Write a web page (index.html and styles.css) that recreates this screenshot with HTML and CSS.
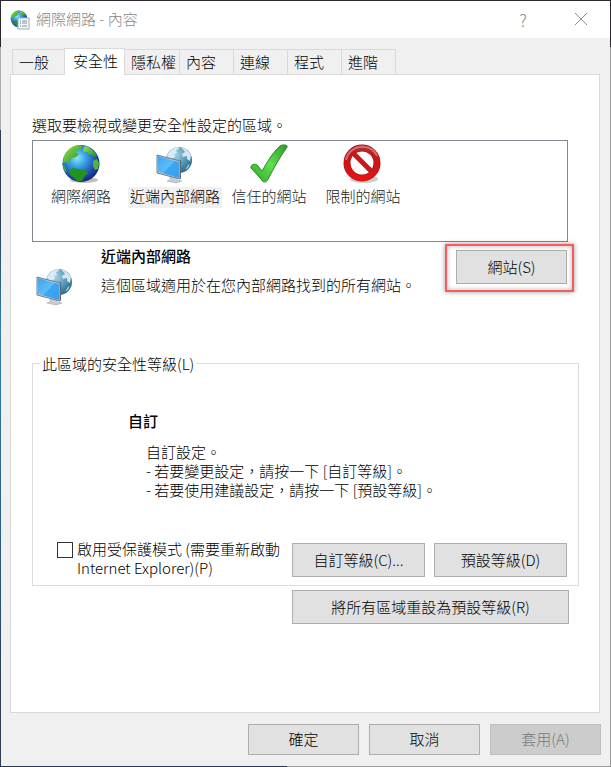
FILE: index.html
```html
<!DOCTYPE html>
<html lang="zh-Hant">
<head>
  <meta charset="UTF-8">
  <meta name="viewport" content="width=device-width, initial-scale=1.0">
  <title>網際網路 - 內容</title>
  <link rel="stylesheet" href="styles.css">
</head>
<body>
  <!-- shared icons -->
  <svg class="defs" aria-hidden="true">
    <defs>
      <radialGradient id="sea" cx="0.4" cy="0.35" r="0.65">
        <stop offset="0" stop-color="#8fe6fb"/>
        <stop offset="0.35" stop-color="#38a5e4"/>
        <stop offset="0.75" stop-color="#2350b4"/>
        <stop offset="1" stop-color="#142b78"/>
      </radialGradient>
      <linearGradient id="land" x1="0" y1="0" x2="1" y2="1">
        <stop offset="0" stop-color="#9be650"/>
        <stop offset="1" stop-color="#1d8a20"/>
      </linearGradient>
      <radialGradient id="paleSea" cx="0.35" cy="0.3" r="0.75">
        <stop offset="0" stop-color="#a9d4e6"/>
        <stop offset="0.55" stop-color="#5a9cbc"/>
        <stop offset="1" stop-color="#2c6686"/>
      </radialGradient>
      <linearGradient id="screen" x1="0" y1="0" x2="1" y2="1">
        <stop offset="0" stop-color="#3fa4ee"/>
        <stop offset="0.5" stop-color="#5fbdf8"/>
        <stop offset="0.52" stop-color="#3ba6f2"/>
        <stop offset="1" stop-color="#3c9eea"/>
      </linearGradient>
      <linearGradient id="tick" x1="1" y1="0" x2="0" y2="1">
        <stop offset="0" stop-color="#2f9a28"/>
        <stop offset="0.5" stop-color="#5fe04e"/>
        <stop offset="1" stop-color="#2aa324"/>
      </linearGradient>
      <linearGradient id="stop" x1="0" y1="0" x2="0" y2="1">
        <stop offset="0" stop-color="#b8282a"/>
        <stop offset="0.5" stop-color="#cc1214"/>
        <stop offset="1" stop-color="#e61412"/>
      </linearGradient>
    </defs>
    <symbol id="icon-globe" viewBox="0 0 40 40">
      <ellipse cx="23" cy="36" rx="14" ry="3" fill="#000" opacity="0.25"/>
      <circle cx="20" cy="19.500" r="18.500" fill="url(#sea)"/>
      <path d="M3 12C6 6 11 2 17 1l4 1-1 3-4 1-1 3 3 1-3 3-4 1-3 4 0 2-3-2-3 1z" fill="url(#land)"/>
      <path d="M24 2c6 2 10 6 12 10l-3 1-3-3-2 1-2-3-3 0-1-3z" fill="url(#land)"/>
      <path d="M32 17l4-2 2 4-1 6-3 1-2-4z" fill="#4fb63a"/>
      <path d="M8 27l4-3 5 1 8 1 2 3-4 4-2 4-5 0-4-4-3-2z" fill="#1f9420"/>
      <path d="M1 19l3 4 2 6-3-3z" fill="#3eae2e"/>
    </symbol>
    <symbol id="icon-network" viewBox="0 0 40 40">
      <circle cx="24" cy="16" r="13" fill="url(#paleSea)"/>
      <path d="M12 12c2-5 6-8 11-9l1 2-3 1 1 3-3 1 1 3-4 2-2-1z" fill="#dcebf2"/>
      <path d="M26 3c4 1 8 4 10 8l-1 6-3-2 0-3-4 1-1-3 3-2z" fill="#d3e5ee"/>
      <path d="M33 21l2-1-2 4-3 2z" fill="#a7cddd"/>
      <path d="M15 32l6 1 1 3 5 1-6 2-9-2 3-1z" fill="#c9cdd1" stroke="#959ca2" stroke-width="0.500"/>
      <path d="M2 11l23 6v18L2 29z" fill="#cdd3d7" stroke="#6e7d87" stroke-width="1"/>
      <path d="M3 12l21 6v16L3 28z" fill="url(#screen)"/>
      <path d="M25 17l1-1v18l-1 1z" fill="#58656e"/>
    </symbol>
    <symbol id="icon-trusted" viewBox="0 0 40 40">
      <path d="M3 25c-1-3 4-5 6-3l5 6C20 18 25 9 32 2c3-2 8-1 7 1C31 14 26 24 20 35c-2 4-6 4-8 0z" fill="#777" opacity="0.3"/>
      <path d="M2 24c-1-3 4-5 6-3l5 6C19 17 24 8 31 2c3-2 8-1 7 1C31 13 25 23 19 35c-2 4-5 4-7 0z" fill="url(#tick)" stroke="#278d25" stroke-width="1"/>
    </symbol>
    <symbol id="icon-restricted" viewBox="0 0 40 40">
      <ellipse cx="21" cy="35" rx="14" ry="4" fill="#000" opacity="0.2"/>
      <circle cx="19" cy="19" r="15" fill="#fff" stroke="#9d1214" stroke-width="7"/>
      <circle cx="19" cy="19" r="15" fill="none" stroke="url(#stop)" stroke-width="6"/>
      <path d="M9 8l21 21" stroke="#c81a1c" stroke-width="5"/>
      <path d="M3 16C5 7 13 2 21 3c6 0 11 4 13 9" fill="none" stroke="#fff" stroke-width="2" opacity="0.35"/>
    </symbol>
  </svg>

  <main class="dialog">
    <header class="title-bar">
      <svg class="title-icon" viewBox="0 0 20 20" aria-hidden="true">
        <use href="#icon-globe" x="0" y="0" width="18" height="18"/>
        <path d="M8 8h11v11H8z" fill="#f4f7f9" stroke="#a0acb5"/>
        <path d="M10 11h1M10 13h1M10 16h1" stroke="#338ad0"/>
        <path d="M12 11h5M12 13h5M12 16h5" stroke="#849099"/>
      </svg>
      <h1 class="title">網際網路 - 內容</h1>
      <button class="caption-button help" aria-label="說明">?</button>
      <button class="caption-button" aria-label="關閉">
        <svg width="14" height="14" viewBox="0 0 14 14"><path d="M1 1l12 12M13 1L1 13" stroke="#8c8c8c" fill="none"/></svg>
      </button>
    </header>

    <div class="tabs" role="tablist">
      <button class="tab" role="tab">一般</button>
      <button class="tab active" role="tab" aria-selected="true">安全性</button>
      <button class="tab" role="tab">隱私權</button>
      <button class="tab" role="tab">內容</button>
      <button class="tab" role="tab">連線</button>
      <button class="tab" role="tab">程式</button>
      <button class="tab" role="tab">進階</button>
    </div>

    <section class="panel">
      <p class="hint">選取要檢視或變更安全性設定的區域。</p>

      <div class="zones">
        <button class="zone">
          <svg class="zone-icon"><use href="#icon-globe"/></svg>
          <span class="zone-name">網際網路</span>
        </button>
        <button class="zone selected">
          <svg class="zone-icon"><use href="#icon-network"/></svg>
          <span class="zone-name">近端內部網路</span>
        </button>
        <button class="zone">
          <svg class="zone-icon"><use href="#icon-trusted"/></svg>
          <span class="zone-name">信任的網站</span>
        </button>
        <button class="zone">
          <svg class="zone-icon"><use href="#icon-restricted"/></svg>
          <span class="zone-name">限制的網站</span>
        </button>
      </div>

      <div class="zone-info">
        <svg class="info-icon" aria-hidden="true"><use href="#icon-network"/></svg>
        <div class="info-text">
          <h2>近端內部網路</h2>
          <p>這個區域適用於在您內部網路找到的所有網站。</p>
        </div>
        <div class="highlight">
          <button class="btn">網站(S)</button>
        </div>
      </div>

      <fieldset class="level">
        <legend>此區域的安全性等級(L)</legend>
        <h2>自訂</h2>
        <div class="level-text">
          <p>自訂設定。</p>
          <p>- 若要變更設定，請按一下 [自訂等級]。</p>
          <p>- 若要使用建議設定，請按一下 [預設等級]。</p>
        </div>
        <div class="level-actions">
          <label class="protect" for="protectedMode">
            <input type="checkbox" id="protectedMode">
            <span>啟用受保護模式 (需要重新啟動 Internet Explorer)(P)</span>
          </label>
          <button class="btn wide">自訂等級(C)...</button>
          <button class="btn wide">預設等級(D)</button>
        </div>
      </fieldset>

      <button class="btn reset">將所有區域重設為預設等級(R)</button>
    </section>

    <footer class="buttons">
      <button class="btn">確定</button>
      <button class="btn">取消</button>
      <button class="btn" disabled>套用(A)</button>
    </footer>
  </main>
</body>
</html>
```

FILE: styles.css
```css
* {
  box-sizing: border-box;
}

body {
  margin: 0;
  padding: 1px;
  min-height: 100vh;
  display: flex;
  font-family: "Noto Sans CJK TC", "Noto Sans", sans-serif;
  font-size: 15px;
  font-weight: 300;
  line-height: 19px;
  color: #000;
  /* desktop showing round the window edge */
  background:
    linear-gradient(#2a282c, #2a282c) top / 100% 1px no-repeat,
    linear-gradient(90deg, #26384c 47%, #9b9b9b 47%) bottom / 100% 1px no-repeat,
    linear-gradient(#2a282c 47px, #aaa 47px, #aaa 130px, #2c3e54 130px, #2c3e54 220px, #2f7fb0 330px, #2a6494 500px, #2c3e54 680px) left / 1px 100% no-repeat,
    linear-gradient(#2a282c 47px, #9b9b9b 47px) right / 1px 100% no-repeat;
}

h1, h2, p {
  margin: 0;
}

button, input {
  font: inherit;
  color: inherit;
  margin: 0;
}

h2 {
  font-size: 15px;
  font-weight: 500;
}

.defs {
  position: absolute;
  width: 0;
  height: 0;
}

.dialog {
  flex: 1;
  min-width: 0;
  display: flex;
  flex-direction: column;
  background: #f0f0f0;
}

/* title bar */
.title-bar {
  display: flex;
  align-items: center;
  height: 37px;
  padding-left: 9px;
  background: #fff;
  color: #888;
}

.title-icon {
  width: 20px;
  height: 20px;
  margin-right: 6px;
}

.title {
  flex: 1;
  padding-bottom: 2px;
  font-size: 15px;
  font-weight: 300;
}

.caption-button {
  display: flex;
  align-items: center;
  justify-content: center;
  width: 58px;
  height: 37px;
  padding: 0 0 1px;
  border: none;
  background: none;
}

.help {
  font-size: 17px;
}

/* tabs */
.tabs {
  display: flex;
  align-items: flex-end;
  padding: 10px 11px 0;
}

.tab {
  min-width: 55px;
  height: 25px;
  margin: 0 0 0 -1px;
  padding: 0 3px 1px 6px;
  border: 1px solid #d9d9d9;
  border-bottom: none;
  background: #f0f0f0;
  text-align: left;
}

.tab:first-child {
  margin-left: 0;
}

.tab.active {
  position: relative;
  height: 27px;
  margin: 0 0 -1px -3px;
  padding: 0 6px 3px 8px;
  background: #fff;
}

/* panel */
.panel {
  flex: 1;
  display: flex;
  flex-direction: column;
  margin: 0 10px 0 9px;
  padding: 40px 20px 0 21px;
  border: 1px solid #d9d9d9;
  background: #fff;
}

.zones {
  display: flex;
  height: 102px;
  margin: 6px 11px 0 0;
  padding: 3px 1px;
  border: 1px solid #828790;
}

.zone {
  display: flex;
  flex-direction: column;
  align-items: center;
  width: 94px;
  padding: 0;
  border: none;
  background: none;
  color: #222;
}

.zone-icon {
  width: 40px;
  height: 40px;
}

.zone-name {
  width: 100%;
  margin-top: 3px;
  padding-bottom: 3px;
  line-height: 18px;
}

.zone.selected {
  color: #000;
}

.zone.selected .zone-name {
  background: #f0f0f0;
}

.zone-info {
  display: flex;
  align-items: flex-start;
  margin-right: 12px;
  padding-top: 4px;
}

.info-icon {
  flex: none;
  width: 40px;
  height: 40px;
  margin: 20px 26px 0 3px;
}

.info-text {
  flex: 1;
}

.info-text p {
  margin-top: 10px;
}

.highlight {
  position: relative;
  margin-top: 4px;
}

.highlight::after {
  content: "";
  position: absolute;
  inset: -6px -7px -8px -11px;
  border: 2px solid #f95c5c;
  box-shadow: 0 0 5px rgba(0, 0, 0, 0.4), inset 0 0 5px rgba(0, 0, 0, 0.3);
  pointer-events: none;
}

/* buttons */
.btn {
  width: 111px;
  height: 34px;
  padding: 0 0 2px;
  border: 1px solid #adadad;
  background: #e1e1e1;
}

.btn:disabled {
  border-color: #bfbfbf;
  background: #ccc;
  color: #777;
}

.btn.wide {
  width: 133px;
}

.reset {
  align-self: flex-end;
  width: 277px;
  margin: 4px 10px 0 0;
}

/* security level */
.level {
  min-width: 0;
  margin: 48px 0 0;
  padding: 38px 11px 8px 24px;
  border: 1px solid #dcdcdc;
}

.level legend {
  margin-left: -17px;
  padding: 0 2px;
}

.level h2 {
  margin-left: 71px;
}

.level-text {
  margin: 12px 0 0 89px;
}

.level-actions {
  display: flex;
  gap: 9px;
  margin-top: 44px;
}

.protect {
  flex: 1;
  display: flex;
  gap: 4px;
  margin: -4px 0 0;
}

.protect input {
  appearance: none;
  flex: none;
  width: 16px;
  height: 16px;
  margin-top: 3px;
  border: 1px solid #333;
  background: #fff;
}

.protect input:checked {
  background: #333;
}

/* footer */
.buttons {
  display: flex;
  justify-content: flex-end;
  gap: 10px;
  padding: 11px 9px 11px;
}

.buttons .btn {
  height: 31px;
}
```
